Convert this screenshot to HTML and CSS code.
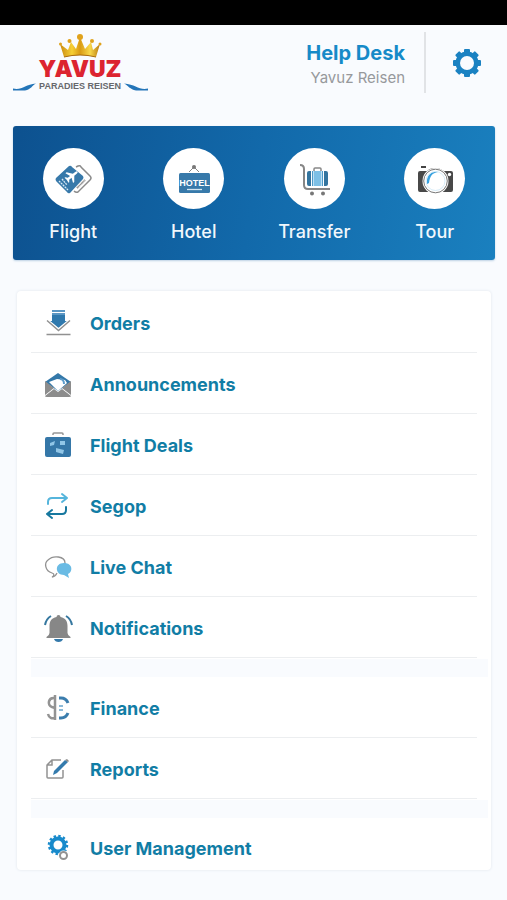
FILE: index.html
```html
<!DOCTYPE html>
<html lang="en">
<head>
<meta charset="utf-8">
<meta name="viewport" content="width=device-width, initial-scale=1">
<title>Yavuz Paradies Reisen</title>
<link rel="stylesheet" href="styles.css">
</head>
<body>
<div class="status-bar"></div>
<header class="header">
  <a class="logo" href="#" aria-label="Yavuz Paradies Reisen">
    <svg width="136" height="60" viewBox="0 0 136 60">
      <defs>
        <linearGradient id="gold" x1="0" y1="0" x2="1" y2="0">
          <stop offset="0" stop-color="#c98a10"/><stop offset=".3" stop-color="#f6cf35"/><stop offset=".5" stop-color="#d99a14"/><stop offset=".75" stop-color="#f8d84a"/><stop offset="1" stop-color="#b97a0e"/>
        </linearGradient>
      </defs>
      <path d="M51 24 47 11l8 6 3-8 5 7 4-12 5 12 6-7 2 8 7-6-4 13q-16-4-32 0z" fill="url(#gold)"/>
      <path d="M51 24q16-4 32 0" fill="none" stroke="#a96a0c"/>
      <g fill="#e0a21c"><circle cx="67" cy="4" r="3"/><circle cx="56.500" cy="8" r="2"/><circle cx="79" cy="8" r="2"/><circle cx="47.500" cy="11" r="1.500"/><circle cx="87" cy="11" r="1.500"/></g>
      <text class="logo-name" x="67" y="44" text-anchor="middle">YAVUZ</text>
      <text class="logo-sub" x="67" y="56" text-anchor="middle">PARADIES REISEN</text>
      <path d="M0 55.500c9 2 12-4 23-5-4 2-5 6-11 7H0zM135 55.500c-9 2-12-4-24-5 4 2 6 6 12 7h12z" fill="#2475b8"/>
    </svg>
  </a>
  <div class="account">
    <div class="account-title">Help Desk</div>
    <div class="account-name">Yavuz Reisen</div>
  </div>
  <button class="settings" aria-label="Settings">
    <svg width="30" height="30" viewBox="-15 -15 30 30">
      <g fill="#1b82c2">
        <rect id="tooth" x="-3" y="-14" width="6" height="28" rx="1"/>
        <use href="#tooth" transform="rotate(45)"/><use href="#tooth" transform="rotate(90)"/><use href="#tooth" transform="rotate(135)"/>
        <circle r="11.500"/>
      </g>
      <circle r="7" fill="#fafbfe"/>
    </svg>
  </button>
</header>

<nav class="services" aria-label="Services">
  <a class="service" href="#">
    <span class="disc"><svg width="40" height="40" viewBox="0 0 40 40">
      <path d="m23 8 2-1q2-1 3 1l9 9q2 2 0 4L25 33q-2 1-4-1" fill="none" stroke="#8b8b8b" stroke-width="1.500"/>
      <path d="m24 29 8-8" stroke="#888" stroke-width="2" stroke-dasharray="1 .5"/>
      <path d="m3 19 13-12q2-1 3 1l11 9q1 2 0 3L17 34q-2 1-3-1L3 22q-1-2 0-3z" fill="#3779aa"/>
      <g transform="translate(19 17) rotate(52)" fill="#fff"><path d="M0-7q1 0 1.200 2v3l5 4v1.500l-5-2v3l2 1.500v1L0 6.500-3.200 7V6l2-1.500v-3l-5 2V2l5-4v-3Q-1-7 0-7z"/></g>
      <path d="m6 22 9 9m-6-11 5 6" stroke="#d9eaf5" stroke-width="1.300" stroke-dasharray="2 .7"/>
    </svg></span>
    <span class="service-label">Flight</span>
  </a>
  <a class="service" href="#">
    <span class="disc"><svg width="40" height="40" viewBox="0 0 40 40">
      <path d="m15 13 5-5 5 5" fill="none" stroke="#858585"/><circle cx="20" cy="8" r="2" fill="#777"/>
      <rect x="5" y="14" width="31" height="20" rx="1.500" fill="#3779aa"/>
      <text class="sign" x="20.500" y="27" text-anchor="middle">HOTEL</text>
      <path d="M13 30.500h15" stroke="#d4e6f2" stroke-width="1.300"/>
    </svg></span>
    <span class="service-label">Hotel</span>
  </a>
  <a class="service" href="#">
    <span class="disc"><svg width="40" height="40" viewBox="0 0 40 40">
      <path d="M6 6q4 0 4 4v16q0 4 4 4h22" fill="none" stroke="#868686" stroke-width="2"/>
      <g fill="#777"><circle cx="18" cy="34.500" r="2"/><circle cx="29" cy="34.500" r="2"/></g>
      <path d="M20 12v-2q0-1 1-1h5q1 0 1 1v2" fill="none" stroke="#888" stroke-width="1.500"/>
      <path d="M15 12h2v15h-2q-2 0-2-2V14q0-2 2-2zm17 0h-2v15h2q2 0 2-2V14q0-2-2-2z" fill="#34759f"/>
      <path d="M18 12h1v15h-1zm10 0h1v15h-1z" fill="#4d9ac9"/><path d="M19.500 12h8v15h-8z" fill="#7dc0e6"/>
    </svg></span>
    <span class="service-label">Transfer</span>
  </a>
  <a class="service" href="#">
    <span class="disc"><svg width="40" height="40" viewBox="0 0 40 40">
      <rect x="6" y="7" width="5" height="2" fill="#444"/>
      <path d="M5 12h7q3-3 8-3t9 3h7q2 0 2 2v17q0 2-2 2H5q-2 0-2-2V14q0-2 2-2z" fill="#484848"/>
      <circle cx="20.500" cy="22" r="13" fill="#fff"/><circle cx="20.500" cy="22" r="11.800" fill="#fff" stroke="#777"/>
      <path d="M12 25c-1-8 4-13 11-12-6 1-8 4-9 11z" fill="#36a1df"/>
      <circle cx="20.500" cy="22" r="9.500" fill="none" stroke="#c4e2f4" stroke-width=".7"/>
      <circle cx="34.500" cy="15.500" r="1.700" fill="#fff"/>
    </svg></span>
    <span class="service-label">Tour</span>
  </a>
</nav>

<main class="menu">
  <ul class="group">
    <li><a class="item" href="#"><svg class="icon" viewBox="0 0 30 30">
      <path d="M9 2h13v2H9zm0 3h13v2H9z" fill="#5b97c4"/><path d="M9 7h13v6h4l-10.500 9L5 13h4z" fill="#3079ad"/>
      <path d="m4 12.500 11.500 9.500L27 12.500" fill="none" stroke="#fff" stroke-width="3.500"/><path d="m4 12.500 11.500 10L27 12.500M3.500 26.500h24" fill="none" stroke="#919191" stroke-width="1.500"/>
    </svg>Orders</a></li>
    <li><a class="item" href="#"><svg class="icon" viewBox="0 0 30 30">
      <path d="m2 13 13-9 13 9-13 9z" fill="#3478a9"/><path d="m6 13 8-3 8 1 2 3-9 8z" fill="#fff"/><path d="M17 10c3 0 4 2 4 5" fill="none" stroke="#5d9dcc" stroke-width="2"/>
      <path d="m2 12 9 7-9 7zm26 0-9 7 9 7zM2 27l9-7 4 3 4-3 9 7q0 1-2 1H4q-2 0-2-1z" fill="#8c8c8c"/>
    </svg>Announcements</a></li>
    <li><a class="item" href="#"><svg class="icon" viewBox="0 0 30 30">
      <path d="M10 5V4q0-1 1-1h8q1 0 1 1v1" fill="none" stroke="#969696" stroke-width="1.500"/>
      <rect x="2" y="7" width="26" height="20" rx="2" fill="#3577a8"/>
      <path d="m7 13 5-2-1 4-4 1zm10-2h5v4h-5zm-4 7 8 2-1 4-7-2z" fill="#91c6e7"/>
    </svg>Flight Deals</a></li>
    <li><a class="item" href="#"><svg class="icon" viewBox="0 0 30 30" fill="none" stroke-width="2" stroke-linecap="round" stroke-linejoin="round">
      <path d="M5 13v-2q0-4 4-4h15m-5-4 5 4-5 4" stroke="#55b5dc"/><path d="M23 16v3q0 4-4 4H4m5-4-5 4 5 4" stroke="#17789f"/>
    </svg>Segop</a></li>
    <li><a class="item" href="#"><svg class="icon" viewBox="0 0 30 30">
      <path d="M9 21C2 19 1 11 5 8c5-5 17-4 17 3M9 21c3 1 2 3 0 4 3 0 4-2 5-4" fill="none" stroke="#929292" stroke-width="1.300"/>
      <path d="M21 11c9 0 9 9 4 11l1 4-5-3c-9 0-10-12 0-12z" fill="#6abbe4"/>
    </svg>Live Chat</a></li>
    <li><a class="item" href="#"><svg class="icon" viewBox="0 0 30 30">
      <path d="M11 26h9q-1 3-4.500 3T11 26z" fill="#3479aa"/><path d="M13.500 4q0-2 2-2t2 2c5 1 7 4 7 9v7q0 2 3 4v1h-24v-1q3-2 3-4v-7c0-5 2-8 7-9z" fill="#878787"/>
      <path d="M8 3q-5 3-6 9M23 3q5 3 6 9" fill="none" stroke="#35779f" stroke-width="2"/>
    </svg>Notifications</a></li>
  </ul>
  <ul class="group">
    <li><a class="item" href="#"><svg class="icon" viewBox="0 0 30 30" fill="none">
      <path d="M12 2v25M12 5C5 4 4 12 9 14l3 1M5 21c1 4 4 5 7 4" stroke="#939393" stroke-width="2.500"/>
      <path d="M16 5h2q5 0 7 5M16 25h2q5 0 7-5" stroke="#3b7dad" stroke-width="3"/><path d="M16 13h4m-4 4h4" stroke="#68a4cc" stroke-width="1.500"/>
    </svg>Finance</a></li>
    <li><a class="item" href="#"><svg class="icon" viewBox="0 0 30 30">
      <path d="M18 6H9l-5 5v12q0 1 1 1h14q1 0 1-1v-7M9 6v5H4" fill="none" stroke="#929292" stroke-width="1.500"/>
      <path d="m11 17 11-11 3 2-11 11-4 2z" fill="#347bad"/><path d="m22 6 2-1 2 2-1 1z" fill="#8a8a8a"/>
    </svg>Reports</a></li>
  </ul>
  <ul class="group">
    <li><a class="item" href="#"><svg class="icon" viewBox="0 0 30 30" fill="none">
      <circle cx="15" cy="12" r="9" stroke="#188acb" stroke-width="2.500" stroke-dasharray="2.400 2.312"/><circle cx="15" cy="12" r="6.500" stroke="#188acb" stroke-width="4"/>
      <circle cx="20.500" cy="22.500" r="5" fill="#fff"/><circle cx="20.500" cy="22.500" r="3.500" stroke="#929292" stroke-width="2"/>
    </svg>User Management</a></li>
  </ul>
</main>
</body>
</html>
```

FILE: styles.css
```css
* {
  box-sizing: border-box;
}

body {
  margin: 0;
  background: #f9fbfe;
  font-family: Inter, "Liberation Sans", sans-serif;
}

a {
  color: inherit;
  text-decoration: none;
}

svg {
  display: block;
}

.status-bar {
  height: 25px;
  background: #000;
}

.header {
  display: flex;
  align-items: center;
  padding: 7px 25px 0 13px;
}

.logo-name {
  font: 900 23px Inter, sans-serif;
  fill: #dc2430;
}

.logo-sub {
  font: bold 9px "Liberation Sans", sans-serif;
  fill: #66686c;
}

.account {
  margin-left: auto;
  padding: 8px 19px 4px 0;
  border-right: 2px solid #e1e3e6;
  text-align: right;
}

.account-title {
  font-size: 20px;
  line-height: 26px;
  font-weight: 700;
  color: #168ac8;
}

.account-name {
  font-size: 15px;
  line-height: 23px;
  color: #97999c;
}

.settings {
  margin-left: 26px;
  padding: 0;
  border: 0;
  background: none;
}

.services {
  display: grid;
  grid-template-columns: repeat(4, 1fr);
  margin: 33px 12px 31px 13px;
  padding: 22px 0 15px;
  border-radius: 3px;
  background: linear-gradient(100deg, #0d518f, #1269aa 50%, #1a80bf);
  box-shadow: 0 1px 2px #1a66a044;
}

.service {
  display: flex;
  flex-direction: column;
  align-items: center;
  gap: 9px;
}

.disc {
  display: grid;
  place-items: center;
  width: 61px;
  height: 61px;
  border-radius: 50%;
  background: #fff;
}

.sign {
  font: bold 9px "Liberation Sans", sans-serif;
  fill: #fff;
}

.service-label {
  font-size: 18px;
  line-height: 27px;
  font-weight: 500;
  color: #f1f7fc;
}

.menu {
  margin: 0 16px 28px 17px;
  border-radius: 4px;
  background: #fff;
  box-shadow: 0 0 3px #dfe5ec;
}

.group {
  margin: 0;
  padding: 1px 0 0;
  list-style: none;
}

.group + .group::before {
  content: "";
  display: block;
  height: 18px;
  margin: 0 3px 0 14px;
  background: #f9fbfe;
}

.group li {
  margin: 0 14px;
  border-bottom: 1px solid #eceef0;
}

.group:last-child li {
  border-bottom: 0;
}

.item {
  display: flex;
  align-items: center;
  gap: 17px;
  height: 60px;
  padding-left: 12px;
  padding-top: 2px;
  font-size: 18px;
  font-weight: 700;
  color: #117da5;
}

.group:last-child .item {
  height: 52px;
  padding-top: 8px;
}

.icon {
  width: 30px;
  height: 30px;
}
```
